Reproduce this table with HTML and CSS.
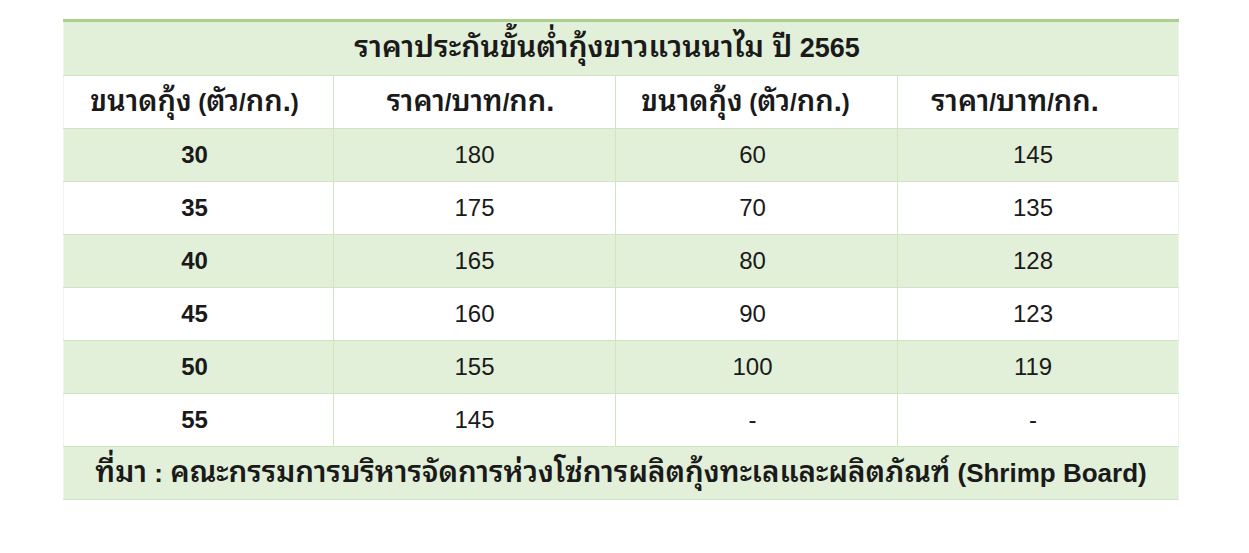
FILE: index.html
```html
<!DOCTYPE html>
<html lang="th">
<head>
<meta charset="utf-8">
<link rel="stylesheet" href="styles.css">
</head>
<body>
<table class="price">
  <colgroup>
    <col class="c1"><col class="c2"><col class="c3"><col class="c4">
  </colgroup>
  <tr class="title"><td colspan="4"><span class="th">ราคาประกันขั้นต่ำกุ้งขาวแวนนาไม ปี</span> 2565</td></tr>
  <tr class="head">
    <td><span class="th">ขนาดกุ้ง</span> (<span class="th">ตัว</span>/<span class="th">กก.</span>)</td>
    <td><span class="th">ราคา</span>/<span class="th">บาท</span>/<span class="th">กก.</span></td>
    <td><span class="th">ขนาดกุ้ง</span> (<span class="th">ตัว</span>/<span class="th">กก.</span>)</td>
    <td><span class="th">ราคา</span>/<span class="th">บาท</span>/<span class="th">กก.</span></td>
  </tr>
  <tr class="band"><td class="size">30</td><td>180</td><td>60</td><td>145</td></tr>
  <tr><td class="size">35</td><td>175</td><td>70</td><td>135</td></tr>
  <tr class="band"><td class="size">40</td><td>165</td><td>80</td><td>128</td></tr>
  <tr><td class="size">45</td><td>160</td><td>90</td><td>123</td></tr>
  <tr class="band"><td class="size">50</td><td>155</td><td>100</td><td>119</td></tr>
  <tr><td class="size">55</td><td>145</td><td>-</td><td>-</td></tr>
  <tr class="foot"><td colspan="4"><span class="th">ที่มา</span> : <span class="th">คณะกรรมการบริหารจัดการห่วงโซ่การผลิตกุ้งทะเลและผลิตภัณฑ์</span> (Shrimp Board)</td></tr>
</table>
</body>
</html>
```

FILE: styles.css
```css
html, body {
  margin: 0;
  padding: 0;
  background: #ffffff;
}
body {
  padding: 19px 0 0 63px;
  font-family: "Liberation Sans", "Noto Sans Thai Looped", "Loma", "Noto Sans Thai", "Noto Sans", sans-serif;
  color: #1a1a1a;
}
.price {
  width: 1115px;
  border-collapse: collapse;
  table-layout: fixed;
  border-top: 3px solid #a9d08e;
}
.c1 { width: 270px; }
.c2 { width: 282px; }
.c3 { width: 282px; }
.c4 { width: 281px; }
.price td {
  height: 52px;
  padding: 0;
  text-align: center;
  vertical-align: middle;
  font-size: 24px;
  line-height: 1.2;
  border: 1px solid #d0e6c2;
  white-space: nowrap;
}
.price tr td:first-child { border-left-color: #eef6e9; padding-right: 8px; }
.price tr td:nth-child(3) { padding-right: 8px; }
.price tr td:last-child { border-right-color: #eef6e9; padding-right: 10px; }
.title td, .foot td {
  background: #e2efd9;
  font-weight: bold;
  font-size: 26px;
}
.price tr.title td:first-child { height: 53px; font-size: 27px; padding-right: 28px; }
.price tr.foot td:first-child { padding-right: 0; }
.title .th { font-size: 30px; }
.foot .th { font-size: 29.5px; }
.price .head td:nth-child(2) { padding-right: 8px; }
.price .head td:nth-child(3) { padding-right: 22px; }
.price .head td:nth-child(4) { padding-right: 46px; }
.band td { background: #e2efd9; }
.size { font-weight: bold; }
.head td { font-weight: bold; }
.th { font-size: 29px; line-height: 1; font-weight: 600; }
```
